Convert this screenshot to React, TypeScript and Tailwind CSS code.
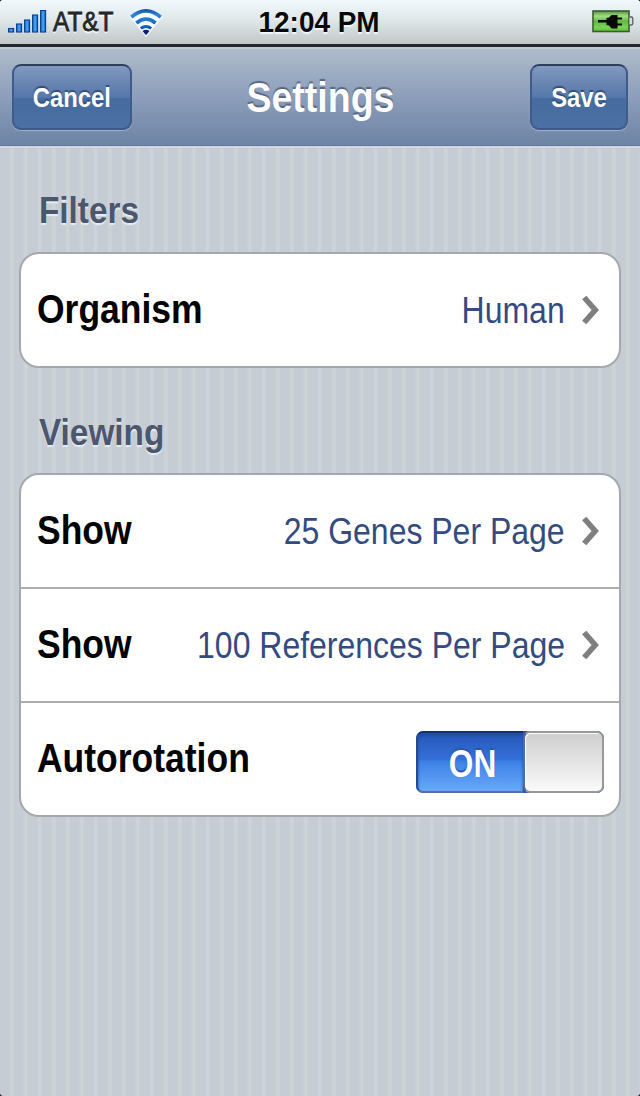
import type { ReactNode } from "react";

function SignalBars() {
  const bars = [
    { x: 0, h: 3.5 },
    { x: 8, h: 8 },
    { x: 16, h: 12 },
    { x: 24, h: 17 },
    { x: 32, h: 21.5 },
  ];
  return (
    <svg width="39" height="24" viewBox="0 0 39 24" className="shrink-0">
      <defs>
        <linearGradient id="bar" x1="0" x2="1" y1="0" y2="0">
          <stop offset="0" stopColor="#0c56b8" />
          <stop offset="0.5" stopColor="#4fb0f4" />
          <stop offset="1" stopColor="#0c4bad" />
        </linearGradient>
      </defs>
      {bars.map((b) => (
        <rect
          key={b.x}
          x={b.x + 0.6}
          y={22 - b.h}
          width={5}
          height={b.h}
          fill="url(#bar)"
          stroke="#0a3f93"
          strokeWidth="1.1"
        />
      ))}
    </svg>
  );
}

function Wifi() {
  return (
    <svg width="34" height="29" viewBox="0 0 34 29" className="shrink-0">
      <defs>
        <linearGradient id="wave" x1="0" x2="0" y1="0" y2="28" gradientUnits="userSpaceOnUse">
          <stop offset="0" stopColor="#0d4497" />
          <stop offset="0.25" stopColor="#2b86dd" />
          <stop offset="0.65" stopColor="#1560bd" />
          <stop offset="1" stopColor="#042c85" />
        </linearGradient>
      </defs>
      <path d="M0 8.500Q17 -6 34 8.500L17 29Z" fill="#f4fafe" />
      <g fill="none" stroke="url(#wave)" strokeWidth="3.600">
        <path d="M2.300 9.200Q17 -3.400 31.700 9.200" />
        <path d="M7.400 15Q17 7 26.600 15" />
        <path d="M11.800 20.400Q17 16.600 22.200 20.400" strokeWidth="3" />
      </g>
      <path d="M13.500 23Q17 20.600 20.500 23L17 27.200Z" fill="#04246f" />
    </svg>
  );
}

function Battery() {
  return (
    <svg width="42" height="24" viewBox="0 0 42 24" className="shrink-0">
      <defs>
        <linearGradient id="cell" x1="0" x2="0" y1="0" y2="1">
          <stop offset="0" stopColor="#4f943d" />
          <stop offset="0.25" stopColor="#a4dd82" />
          <stop offset="0.5" stopColor="#62b743" />
          <stop offset="0.8" stopColor="#78d64e" />
          <stop offset="1" stopColor="#5abc39" />
        </linearGradient>
      </defs>
      <rect x="1" y="1" width="36" height="20.500" fill="url(#cell)" stroke="#3c5a36" strokeWidth="1.6" />
      <path d="M37.500 7H39.300Q40.800 7 40.800 8.500V13.500Q40.800 15 39.300 15H37.500" fill="#d8dedc" stroke="#59615e" strokeWidth="1.300" />
      <path d="M6 10H14.500V8L17 7.500L19.500 5H25.500V7.500H30V9.500H25.500V13.500H30V15.500H25.500V18.500H19.500L17 15.500L14.500 15V12.600H6Z" fill="#050a04" />
    </svg>
  );
}

function NavButton({ children, width }: { children: ReactNode; width: string }) {
  return (
    <button
      className={`flex h-[66px] items-center justify-center rounded-[9px] border-2 border-t-[#2f3e5a] border-x-[#3f5b89] border-b-[#3d5a88] bg-[linear-gradient(#8299bf_0%,#6784b1_30%,#5478ab_51%,#466b9f_52%,#4a70a5_100%)] pt-[2px] shadow-[0_1px_1px_#a2b2ca] ${width}`}
    >
      <span className="inline-block scale-x-[.87] whitespace-nowrap text-[27.4px] leading-none font-bold text-white [text-shadow:0_-2px_1px_#344d78]">
        {children}
      </span>
    </button>
  );
}

function Chevron() {
  return (
    <svg width="18" height="30" viewBox="0 0 18 30" className="shrink-0">
      <path d="M2.200 2.500L13.200 15L2.200 27.500" fill="none" stroke="#7f7f7f" strokeWidth="5.600" />
    </svg>
  );
}

function SectionTitle({ children }: { children: ReactNode }) {
  return (
    <h2 className="flex h-[44px] items-center pl-[20px]">
      <span className="inline-block origin-left scale-x-[.9] text-[37px] leading-none font-bold text-[#4c566c] [text-shadow:0_2px_1px_#e8edf3]">
        {children}
      </span>
    </h2>
  );
}

function Row({ label, children }: { label: string; children: ReactNode }) {
  return (
    <div className="flex h-[112px] items-center justify-between pl-[16px]">
      <span className="inline-block origin-left -translate-y-px scale-x-[.876] text-[40.5px] leading-none font-bold whitespace-nowrap text-black">
        {label}
      </span>
      {children}
    </div>
  );
}

function Value({ children }: { children: ReactNode }) {
  return (
    <div className="flex items-center gap-[17px] pr-[19px]">
      <span className="inline-block origin-right scale-x-[.876] pt-[3px] text-[36.5px] leading-none whitespace-nowrap text-[#334b80]">
        {children}
      </span>
      <Chevron />
    </div>
  );
}

function Toggle() {
  return (
    <div className="mt-[6px] mr-[15px] flex h-[62px] w-[188px] overflow-hidden rounded-[7px] bg-[#2459ae]">
      <div className="flex w-[107px] items-center justify-center rounded-l-[7px] border-2 border-r-0 border-t-[#162f72] border-l-[#244a91] border-b-[#52729f] bg-[linear-gradient(#2758b9_0%,#346fd8_45%,#3e82e8_50%,#67a9f8_100%)] pt-[3px] pl-[3px] shadow-[inset_0_3px_3px_#204daa]">
        <span className="inline-block scale-x-[.83] text-[38px] leading-none font-bold text-white [text-shadow:0_-2px_1px_#2958aa]">
          ON
        </span>
      </div>
      <div className="w-[81px] rounded-[7px] border-2 border-[#999] border-l-[#596b8d] bg-[linear-gradient(#cecece,#fafafa)] shadow-[inset_1px_1px_1px_#fff]" />
    </div>
  );
}

export default function App() {
  return (
    <div className="flex h-[1096px] w-[640px] flex-col overflow-hidden bg-black font-['Liberation_Sans',Arial,sans-serif]">
      <div className="flex min-h-0 flex-1 flex-col overflow-hidden rounded-[3px] bg-[#c5ccd4] bg-[repeating-linear-gradient(90deg,#c5ccd4_0px,#c5ccd4_9px,#ccd4da_11px,#ccd4da_13px,#c5ccd4_14px)]">
        <header className="grid h-[47px] shrink-0 grid-cols-[1fr_auto_1fr] items-center border-b-[3px] border-[#24282d] bg-[linear-gradient(#f0f9fb_0%,#dfe7e9_45%,#c2c8c9_100%)] pr-[6px] pl-[8px]">
          <div className="flex items-center">
            <SignalBars />
            <div className="ml-[6px] w-[76px] pt-[2px]">
              <span className="inline-block origin-left scale-x-[.87] text-[28px] leading-none text-[#24272a] [-webkit-text-stroke:0.8px_#24272a] [text-shadow:0_2px_1px_#fff]">
                AT&amp;T
              </span>
            </div>
            <Wifi />
          </div>
          <span className="mr-[4px] inline-block scale-x-[.93] text-[30px] leading-none font-bold whitespace-nowrap text-[#08090a] [text-shadow:0_2px_1px_#f4f8f8]">
            12:04 PM
          </span>
          <div className="flex justify-end">
            <Battery />
          </div>
        </header>
        <nav className="grid h-[99px] shrink-0 grid-cols-[1fr_auto_1fr] items-center border-t-2 border-b border-t-[#bdc7d6] border-b-[#62779b] bg-[linear-gradient(#aebbcb_0%,#8d9fbb_48%,#6e84a5_100%)] px-[12px]">
          <div className="flex">
            <NavButton width="w-[120px]">Cancel</NavButton>
          </div>
          <h1 className="scale-x-[.865] pt-[1px] pl-[2px] text-[43.4px] leading-none font-bold text-white [text-shadow:0_-2px_1px_#566680]">
            Settings
          </h1>
          <div className="flex justify-end">
            <NavButton width="w-[98px]">Save</NavButton>
          </div>
        </nav>
        <main className="flex flex-1 flex-col border-t-2 border-[#d0d7e1] px-[19px] pt-[40px]">
          <SectionTitle>Filters</SectionTitle>
          <section className="mt-[20px] rounded-[20px] border-2 border-[#a5a9ad] bg-white">
            <Row label="Organism">
              <Value>Human</Value>
            </Row>
          </section>
          <SectionGap />
          <SectionTitle>Viewing</SectionTitle>
          <section className="mt-[19px] flex flex-col rounded-[20px] border-2 border-[#a5a9ad] bg-white">
            <Row label="Show">
              <Value>25 Genes Per Page</Value>
            </Row>
            <Divider />
            <Row label="Show">
              <Value>100 References Per Page</Value>
            </Row>
            <Divider />
            <Row label="Autorotation">
              <Toggle />
            </Row>
          </section>
        </main>
      </div>
    </div>
  );
}

function SectionGap() {
  return <div className="h-[42px]" />;
}

function Divider() {
  return <div className="h-[2px] bg-[#adadaf]" />;
}
